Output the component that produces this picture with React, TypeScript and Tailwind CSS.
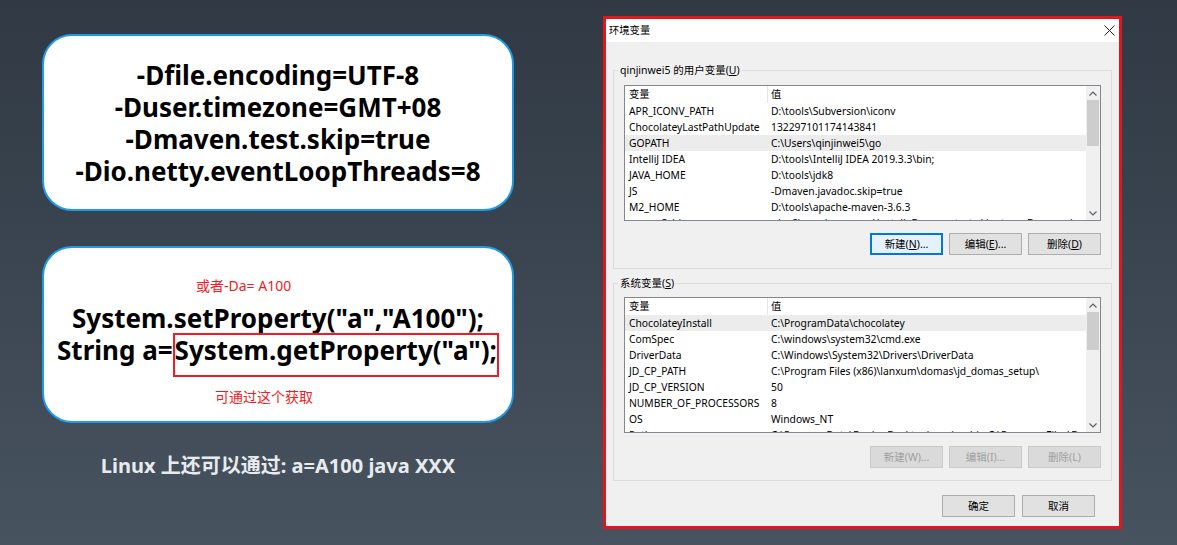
import React from "react";

const UI = { fontFamily: '"Noto Sans", "Noto Sans CJK SC", sans-serif' };
const BIG = { fontFamily: '"Noto Sans", "Noto Sans CJK SC", sans-serif' };

type Row = [string, string];

const userRows: Row[] = [
  ["APR_ICONV_PATH", "D:\\tools\\Subversion\\iconv"],
  ["ChocolateyLastPathUpdate", "132297101174143841"],
  ["GOPATH", "C:\\Users\\qinjinwei5\\go"],
  ["IntelliJ IDEA", "D:\\tools\\IntelliJ IDEA 2019.3.3\\bin;"],
  ["JAVA_HOME", "D:\\tools\\jdk8"],
  ["JS", "-Dmaven.javadoc.skip=true"],
  ["M2_HOME", "D:\\tools\\apache-maven-3.6.3"],
  ["maven3_bin", "c:\\m2\\apache-maven\\install -Dmaven.test.skip=true -Dmaven.javadoc"],
];

const sysRows: Row[] = [
  ["ChocolateyInstall", "C:\\ProgramData\\chocolatey"],
  ["ComSpec", "C:\\windows\\system32\\cmd.exe"],
  ["DriverData", "C:\\Windows\\System32\\Drivers\\DriverData"],
  ["JD_CP_PATH", "C:\\Program Files (x86)\\lanxum\\domas\\jd_domas_setup\\"],
  ["JD_CP_VERSION", "50"],
  ["NUMBER_OF_PROCESSORS", "8"],
  ["OS", "Windows_NT"],
  ["Path", "C:\\ProgramData\\DockerDesktop\\version-bin;C:\\Program Files\\Docker\\D"],
];

function Chevron({ up }: { up?: boolean }) {
  return (
    <svg width="8" height="5" viewBox="0 0 8 5" className="block">
      <polyline
        points={up ? "0.5,4.5 4,1 7.5,4.5" : "0.5,0.5 4,4 7.5,0.5"}
        fill="none"
        stroke="#606060"
        strokeWidth="1.2"
      />
    </svg>
  );
}

function List({ rows, selected, thumbH }: { rows: Row[]; selected: number; thumbH: number }) {
  return (
    <div className="flex h-[136px] w-[477px] border border-[#828790] bg-white">
      <div className="flex-1 overflow-hidden">
        <div className="flex h-[17px] text-[10.3px] leading-[17px] text-black">
          <div className="w-[143px] pl-[4px] border-r border-[#e5e5e5]">变量</div>
          <div className="pl-[3px]">值</div>
        </div>
        {rows.map((r, i) => (
          <div
            key={i}
            className={
              "flex h-[16px] whitespace-nowrap text-[10.3px] leading-[16px] text-black " +
              (i === selected ? "bg-[#ececec]" : "")
            }
          >
            <div className="w-[143px] shrink-0 overflow-hidden pl-[4px]">{r[0]}</div>
            <div className="pl-[3px]">{r[1]}</div>
          </div>
        ))}
      </div>
      <div className="flex w-[14px] flex-col bg-[#f0f0f0]">
        <div className="flex h-[14px] items-center justify-center">
          <Chevron up />
        </div>
        <div className="mx-[1px] bg-[#cdcdcd]" style={{ height: thumbH }} />
        <div className="flex-1" />
        <div className="flex h-[14px] items-center justify-center">
          <Chevron />
        </div>
      </div>
    </div>
  );
}

function Btn({ children, w = 73, focus, disabled }: { children: React.ReactNode; w?: number; focus?: boolean; disabled?: boolean }) {
  let cls = "flex h-[22px] items-center justify-center border text-[10.5px] leading-none ";
  if (disabled) cls += "border-[#cacaca] bg-[#dadada] text-[#a0a0a0]";
  else if (focus) cls += "border-[#0078d7] bg-[#e5f1fb] shadow-[inset_0_0_0_1px_#0078d7] text-black";
  else cls += "border-[#adadad] bg-[#e1e1e1] text-black";
  return (
    <div className={cls} style={{ width: w }}>
      {children}
    </div>
  );
}

function Dialog() {
  return (
    <div className="h-[513px] w-[519px] border-[3px] border-[#e3161c] bg-[#f0f0f0]" style={UI}>
      <div className="flex h-[23px] items-center justify-between bg-white pl-[3px] pr-[4px]">
        <span className="text-[10.3px] text-black">环境变量</span>
        <svg width="11" height="11" viewBox="0 0 11 11">
          <line x1="0.5" y1="0.5" x2="10.5" y2="10.5" stroke="#222" strokeWidth="1" />
          <line x1="10.5" y1="0.5" x2="0.5" y2="10.5" stroke="#222" strokeWidth="1" />
        </svg>
      </div>

      <fieldset className="mx-[7px] mt-[20px] border border-[#dcdcdc] pl-[10px] pr-[9px] pt-[7px] pb-[13px]">
        <legend className="ml-[-6px] px-[2px] text-[10.5px] leading-[16px] text-black">
          qinjinwei5 的用户变量(<u>U</u>)
        </legend>
        <List rows={userRows} selected={2} thumbH={46} />
        <div className="mt-[12px] flex justify-end gap-[6px] pr-[1px]">
          <Btn focus>
            新建(<u>N</u>)...
          </Btn>
          <Btn>
            编辑(<u>E</u>)...
          </Btn>
          <Btn>
            删除(<u>D</u>)
          </Btn>
        </div>
      </fieldset>

      <fieldset className="mx-[7px] mt-[6px] border border-[#dcdcdc] pl-[10px] pr-[9px] pt-[6px] pb-[12px]">
        <legend className="ml-[-6px] px-[2px] text-[10.5px] leading-[16px] text-black">
          系统变量(<u>S</u>)
        </legend>
        <List rows={sysRows} selected={0} thumbH={38} />
        <div className="mt-[13px] flex justify-end gap-[6px] pr-[1px]">
          <Btn disabled>新建(W)...</Btn>
          <Btn disabled>编辑(I)...</Btn>
          <Btn disabled>删除(L)</Btn>
        </div>
      </fieldset>

      <div className="mt-[14px] flex justify-end gap-[7px] pr-[24px]">
        <Btn>确定</Btn>
        <Btn>取消</Btn>
      </div>
    </div>
  );
}

export default function App() {
  return (
    <div className="flex h-[545px] w-[1177px] overflow-hidden bg-gradient-to-b from-[#303944] to-[#47535f]">
      <div className="ml-[42px] mt-[34px] flex w-[472px] shrink-0 flex-col" style={BIG}>
        <div className="flex h-[177px] flex-col items-center justify-center rounded-[30px] border-2 border-[#1e9be6] bg-white text-[26px] font-bold leading-[32px] text-black">
          <div>-Dfile.encoding=UTF-8</div>
          <div>-Duser.timezone=GMT+08</div>
          <div>-Dmaven.test.skip=true</div>
          <div>-Dio.netty.eventLoopThreads=8</div>
        </div>

        <div className="mt-[35px] flex h-[177px] flex-col rounded-[30px] border-2 border-[#1e9be6] bg-white pt-[28px] text-black">
          <div className="ml-[152px] text-[14px] leading-[20px] text-[#ee1c25]">或者-Da= A100</div>
          <div className="mt-[7px] text-center text-[26px] font-bold leading-[30px]">System.setProperty("a","A100");</div>
          <div className="flex items-start justify-center text-[26px] font-bold leading-[30px]">
            <span className="mt-[2px]">String a=</span>
            <span className="h-[44px] border-2 border-[#ee1c25]">System.getProperty("a");</span>
          </div>
          <div className="ml-[171px] mt-[10px] text-[14px] leading-[20px] text-[#ee1c25]">可通过这个获取</div>
        </div>

        <div className="mt-[32px] text-center text-[20px] font-bold leading-[22px] text-[#e8ebee]">
          Linux 上还可以通过: a=A100 java XXX
        </div>
      </div>

      <div className="ml-[89px] mt-[16px]">
        <Dialog />
      </div>
    </div>
  );
}
